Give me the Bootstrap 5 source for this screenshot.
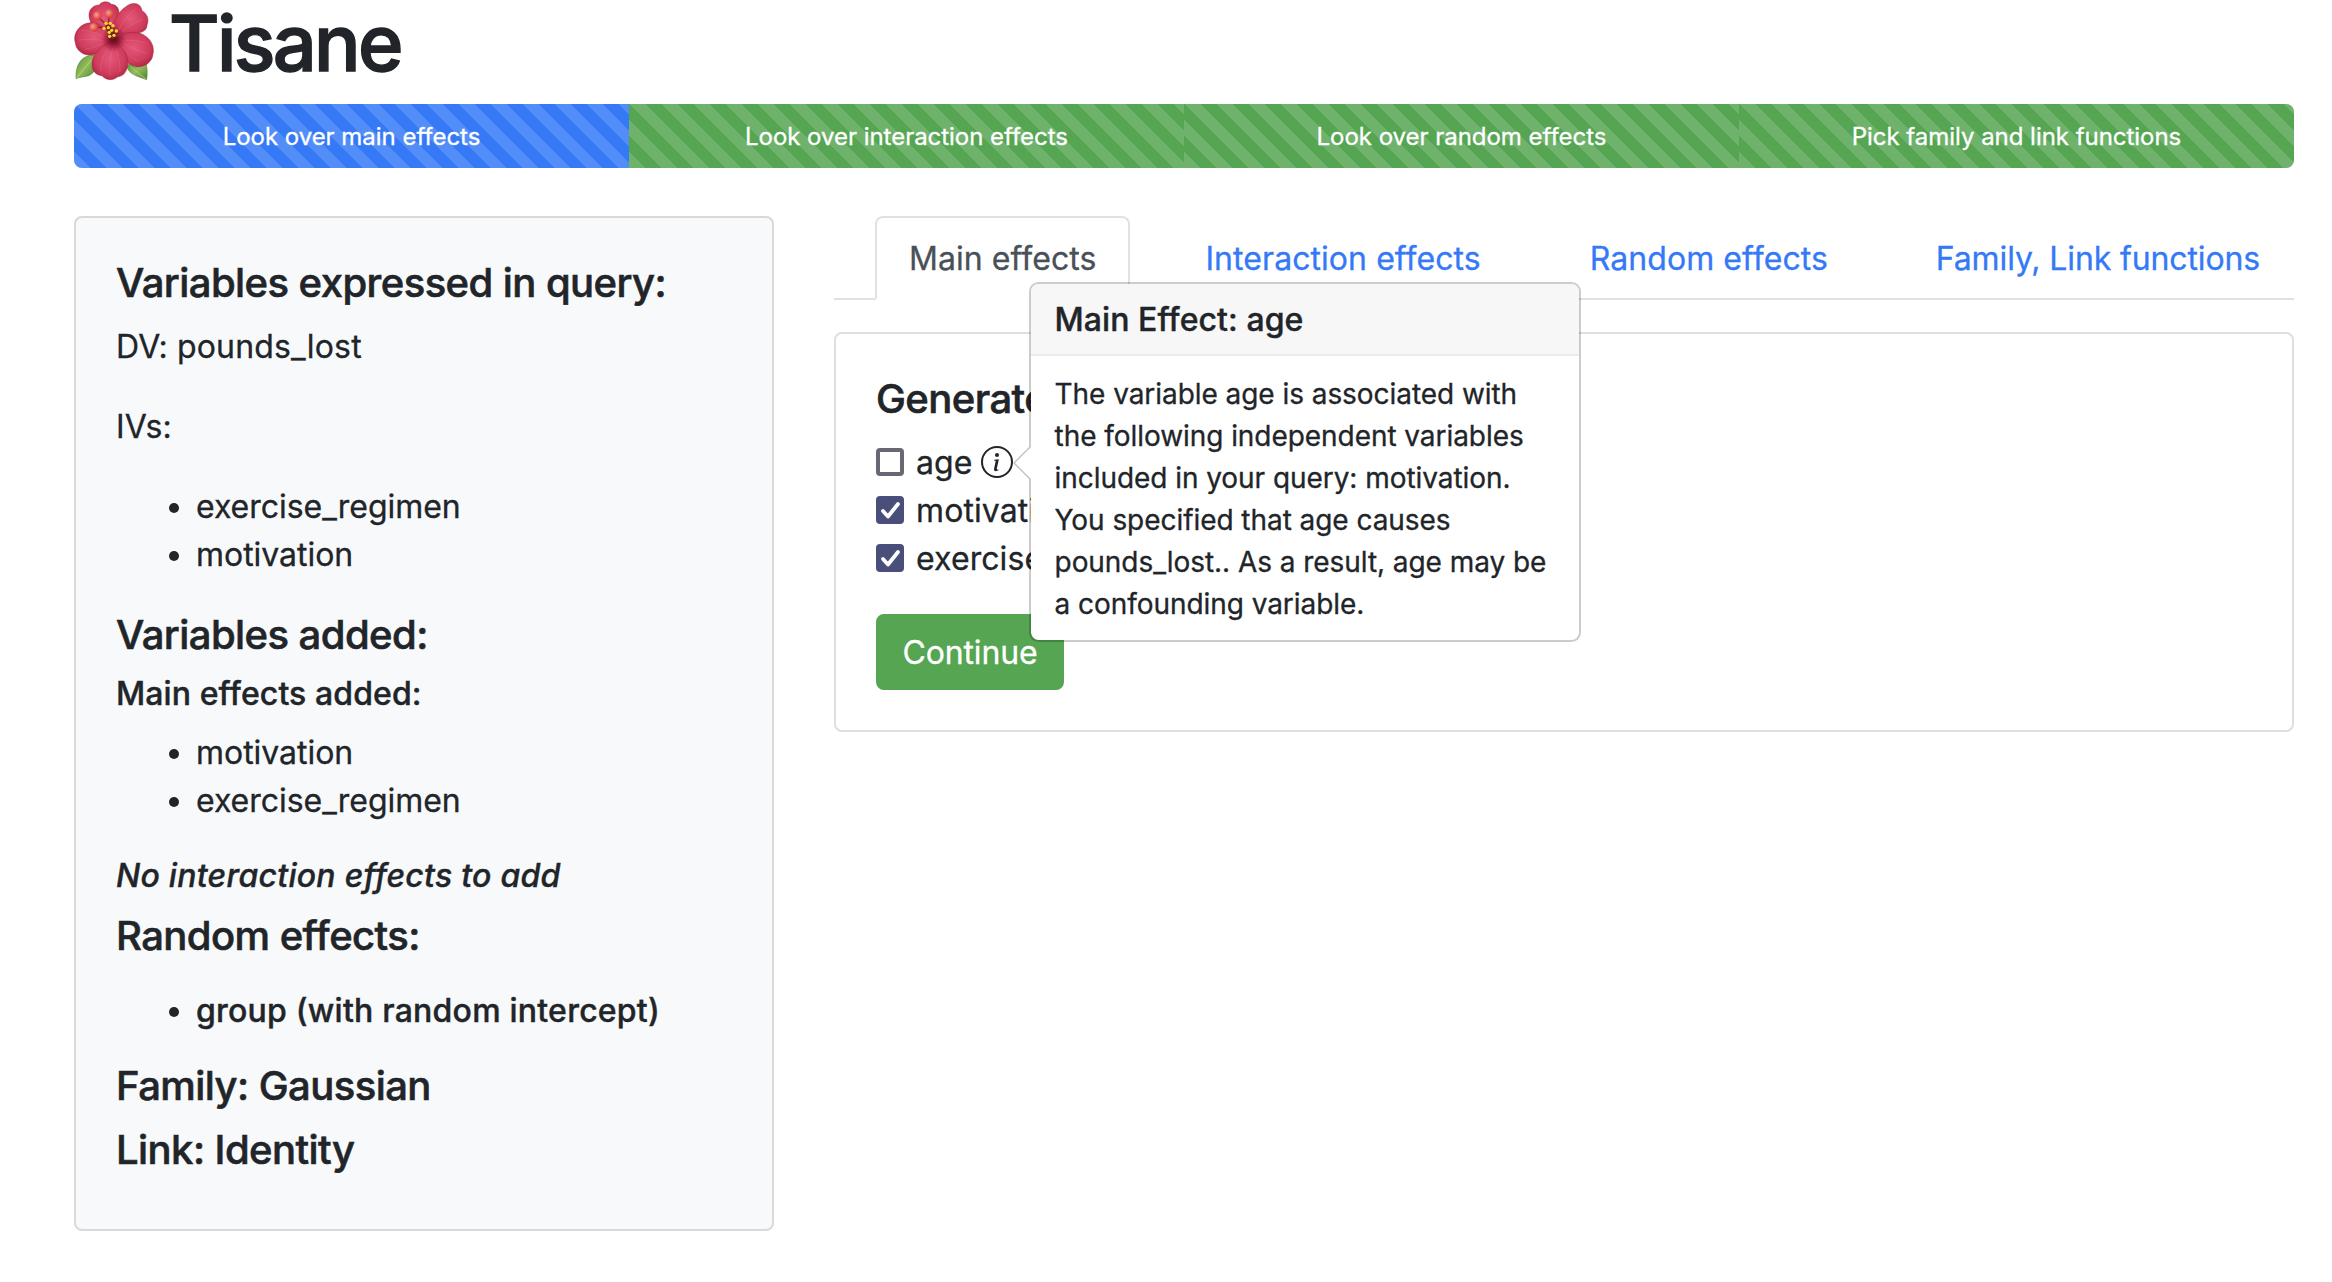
<!DOCTYPE html>
<html lang="en">
<head>
<meta charset="utf-8">
<meta name="viewport" content="width=device-width, initial-scale=1">
<title>Tisane</title>
<link href="https://cdn.jsdelivr.net/npm/bootstrap@5.3.0/dist/css/bootstrap.min.css" rel="stylesheet">
<style>
  :root { font-size: 32px; }
  body {
    font-family: Inter, "Liberation Sans", sans-serif;
    color: #212529;
    letter-spacing: -.001em;
    -webkit-text-stroke: .3px currentColor;
    overflow: hidden;
  }
  .page { padding: 0 38px 0 74px; }
  .brand { height: 88px; margin-bottom: 16px; gap: 15px; }
  .brand svg { width: 80px; height: 86px; flex: none; margin-top: -2px; }
  .brand h1 { font-size: 77.500px; letter-spacing: -.035em; line-height: 1; -webkit-text-stroke-width: 1.400px; }
  h5, .h5 { font-size: 1.25rem; letter-spacing: -.014em; -webkit-text-stroke-width: .6px; }
  h6, .h6 { font-size: 1rem; letter-spacing: .003em; -webkit-text-stroke-width: .4px; }
  h5, h6 { margin-bottom: .5rem; }

  .steps { --bs-progress-height: 64px; --bs-progress-font-size: 24px; --bs-progress-border-radius: 8px; margin-bottom: 48px; }
  .steps .progress-bar { width: 25%; background-size: 32px 32px; padding-top: 1px; }
  .step-now { background-color: #3579f6; }
  .step-next { background-color: #55a552; }

  .main-row { --bs-gutter-x: 60px; }
  .card { --bs-card-border-width: 2px; --bs-card-border-radius: 8px; --bs-card-inner-border-radius: 6px; --bs-card-border-color: rgba(0,0,0,.125); --bs-card-spacer-x: 40px; --bs-card-spacer-y: 40px; }
  .summary { --bs-card-bg: #f8f9fb; }
  .summary .card-body { padding-top: 41px; padding-bottom: 39px; }
  .summary p { letter-spacing: .005em; }
  ul.terms { padding-left: 80px; margin-bottom: 1rem; }
  .note { letter-spacing: .008em; }
  .grp { letter-spacing: .007em; }

  .nav-tabs { --bs-nav-tabs-border-width: 2px; --bs-nav-tabs-border-radius: 8px; --bs-nav-tabs-border-color: #dee2e6; --bs-nav-link-padding-x: 32px; --bs-nav-link-color: #3579f6; --bs-nav-tabs-link-active-color: #495057; }
  .nav-tabs .nav-item { margin-left: 41px; }
  .nav-tabs .nav-item:last-child { margin-left: auto; }
  .nav-tabs .nav-link { margin-bottom: -2px; padding-top: 17px; padding-bottom: 15px; letter-spacing: .002em; }
  .nav-tabs .nav-link.long { letter-spacing: -.004em; }

  .tick { width: 28px; height: 28px; flex: none; margin-right: 12px; display: block; }
  .opt { height: 48px; }
  .opt > span:not(.info) { padding-top: 1px; letter-spacing: .003em; }
  .card .h5-shift { padding-top: 1px; margin-bottom: 15px; }
  .info { position: relative; width: 32px; height: 32px; margin-left: 8px; }
  .info > svg { display: block; width: 32px; height: 32px; }
  .btn-continue { --bs-btn-bg: #55a552; --bs-btn-border-color: #55a552; --bs-btn-color: #fff; --bs-btn-border-width: 2px; --bs-btn-border-radius: 8px; --bs-btn-padding-x: 24px; width: 188px; padding-top: 13px; padding-bottom: 11px; letter-spacing: -.004em; white-space: nowrap; }

  .tip { --bs-popover-max-width: 552px; --bs-popover-border-width: 2px; --bs-popover-border-radius: 9.6px; --bs-popover-inner-border-radius: 7.6px; --bs-popover-border-color: rgba(0,0,0,.2); --bs-popover-font-size: 28px; --bs-popover-header-font-size: 32px; --bs-popover-header-bg: #f7f7f7; --bs-popover-body-padding-x: 24px;
    position: absolute; width: 552px; left: 48px; top: -164px; letter-spacing: -.002em; font-family: Inter, "Liberation Sans", sans-serif; }
  .tip .popover-header { padding: 17px 24px 15px; border-bottom: 2px solid #ebebeb; line-height: 1.2; letter-spacing: .002em; -webkit-text-stroke-width: .4px; }
  .tip .popover-body { color: #212529; padding-top: 17px; padding-bottom: 15px; }
  .tip-arrow { position: absolute; left: -18px; top: 162px; width: 19px; height: 34px; display: block; }
</style>
</head>
<body>
<div class="container-fluid page">
  <header class="brand d-flex align-items-center">
    <svg viewBox="18 0 240 258" aria-hidden="true">
      <defs>
        <radialGradient id="petal" cx=".5" cy=".45" r=".62"><stop offset="0" stop-color="#e4587a"/><stop offset=".65" stop-color="#d03c5c"/><stop offset="1" stop-color="#a8243f"/></radialGradient>
        <radialGradient id="throat"><stop offset="0" stop-color="#5c0615"/><stop offset=".4" stop-color="#7d1026" stop-opacity=".8"/><stop offset="1" stop-color="#a01c38" stop-opacity="0"/></radialGradient>
        <radialGradient id="bead" cx=".4" cy=".4" r=".6"><stop offset="0" stop-color="#f9a08d"/><stop offset="1" stop-color="#d93a35"/></radialGradient>
        <linearGradient id="leaf" x1="0" y1="0" x2="1" y2="1"><stop offset="0" stop-color="#588c36"/><stop offset=".5" stop-color="#93bd5c"/><stop offset="1" stop-color="#4f8230"/></linearGradient>
      </defs>
      <g fill="url(#leaf)" stroke="#4d7d31" stroke-width="1.5">
        <path d="M78 165C45 165 22 188 24 236c22-10 46 0 58-30Z"/>
        <path d="M176 196c4 26 28 32 60 43 3-18 2-36-2-50-18-10-40-6-58 7Z"/>
      </g>
      <path d="M26 233 70 180M234 237l-46-36" fill="none" stroke="#c1da8d" stroke-width="2"/>
      <g fill="url(#petal)" stroke="#a52742" stroke-width="1.5">
        <path d="M130 112C96 98 62 76 63 44c1-19 17-30 31-29 8-13 28-12 36-2 18 1 26 16 22 34Z"/>
        <path d="M136 112C128 72 150 28 188 12c18-6 32 4 34 20 16 10 22 26 15 43 0 20-22 26-46 25-22 0-40 2-55 12Z"/>
        <path d="M134 118C112 78 84 62 56 70 30 78 14 104 22 128c2 22 22 38 44 37 30 0 56-18 68-47Z"/>
        <path d="M138 116c28-22 72-26 97-6 18 14 24 34 20 52-2 24-24 40-48 38-40-8-60-42-69-84Z"/>
        <path d="M134 122c-32 14-64 42-62 72 0 20 14 32 30 33 12 14 32 16 46 4 22-2 34-24 31-50-2-26-20-48-45-59Z"/>
      </g>
      <g fill="none" stroke="#f08ba3" stroke-opacity=".35" stroke-width="2">
        <path d="M40 92c24-2 48 6 70 22M32 120c30-4 52-2 76 2M50 148c20-2 40-10 60-22M90 28c8 22 16 38 30 58M200 30c-22 18-38 36-50 64M222 60c-26 8-44 20-62 38M230 128c-26-8-52-8-76-6M236 160c-26-6-52-20-74-34M210 184c-22-10-38-32-54-52M98 214c0-30 10-54 28-78M126 226c-2-30 2-56 8-82M156 216c0-28-6-50-14-74"/>
      </g>
      <circle cx="137" cy="118" r="38" fill="url(#throat)"/>
      <path d="M136 118 124 84 122 48M122 82 90 50M122 84l-40-3" fill="none" stroke="#9b1d31" stroke-width="4"/>
      <g fill="url(#bead)"><circle cx="124" cy="41" r="13"/><circle cx="88" cy="47" r="13"/><circle cx="77" cy="82" r="13"/></g>
      <path d="m118 76 18 34" stroke="#6d2512" stroke-width="15"/>
      <g fill="#f5dc2c"><circle cx="114" cy="70" r="5"/><circle cx="127" cy="70" r="5"/><circle cx="108" cy="85" r="5"/><circle cx="121" cy="83" r="5"/><circle cx="135" cy="77" r="5"/><circle cx="131" cy="91" r="5"/><circle cx="145" cy="93" r="5"/><circle cx="124" cy="97" r="5"/><circle cx="125" cy="109" r="5"/><circle cx="138" cy="106" r="5"/></g>
    </svg>
    <h1 class="mb-0">Tisane</h1>
  </header>

  <div class="progress steps">
    <div class="progress-bar progress-bar-striped step-now">Look over main effects</div>
    <div class="progress-bar progress-bar-striped step-next">Look over interaction effects</div>
    <div class="progress-bar progress-bar-striped step-next">Look over random effects</div>
    <div class="progress-bar progress-bar-striped step-next">Pick family and link functions</div>
  </div>

  <div class="row main-row align-items-start">
    <div class="col-4">
      <div class="card summary">
        <div class="card-body">
          <h5>Variables expressed in query:</h5>
          <p>DV: pounds_lost</p>
          <p>IVs:</p>
          <ul class="terms"><li>exercise_regimen</li><li>motivation</li></ul>
          <h5>Variables added:</h5>
          <h6>Main effects added:</h6>
          <ul class="terms"><li>motivation</li><li>exercise_regimen</li></ul>
          <h6 class="fst-italic note">No interaction effects to add</h6>
          <h5>Random effects:</h5>
          <ul class="terms h6 grp pt-2 mt-0 mb-3"><li>group (with random intercept)</li></ul>
          <h5>Family: Gaussian</h5>
          <h5>Link: Identity</h5>
        </div>
      </div>
    </div>

    <div class="col-8">
      <ul class="nav nav-tabs">
        <li class="nav-item"><a class="nav-link active" href="#">Main effects</a></li>
        <li class="nav-item"><a class="nav-link" href="#">Interaction effects</a></li>
        <li class="nav-item"><a class="nav-link" href="#">Random effects</a></li>
        <li class="nav-item"><a class="nav-link long" href="#">Family, Link functions</a></li>
      </ul>
      <div class="card mt-3">
        <div class="card-body">
          <h5 class="h5-shift">Generate</h5>
          <div class="opt d-flex align-items-center">
            <svg class="tick" viewBox="0 0 28 28"><rect x="2" y="2" width="24" height="24" rx="2" fill="#fff" stroke="#696773" stroke-width="4"/></svg>
            <span>age</span>
            <span class="info">
              <svg viewBox="0 0 16 16" fill="currentColor"><path d="M8 15A7 7 0 1 1 8 1a7 7 0 0 1 0 14zm0 1A8 8 0 1 0 8 0a8 8 0 0 0 0 16z"/><path d="m8.93 6.588-2.29.287-.082.38.45.083c.294.07.352.176.288.469l-.738 3.468c-.194.897.105 1.319.808 1.319.545 0 1.178-.252 1.465-.598l.088-.416c-.2.176-.492.246-.686.246-.275 0-.375-.193-.304-.533L8.93 6.588zM9 4.5a1 1 0 1 1-2 0 1 1 0 0 1 2 0z"/></svg>
              <div class="popover tip" role="tooltip">
                <svg class="tip-arrow" viewBox="0 0 19 34"><path d="M19 0 2 17l17 17Z" fill="#fff"/><path d="M17 1 1 17l16 16" fill="none" stroke="#c4c4c4" stroke-width="1.5"/></svg>
                <h3 class="popover-header">Main Effect: age</h3>
                <div class="popover-body">The variable age is associated with the following independent variables included in your query: motivation. You specified that age causes pounds_lost.. As a result, age may be a confounding variable.</div>
              </div>
            </span>
          </div>
          <div class="opt d-flex align-items-center">
            <svg class="tick" viewBox="0 0 28 28"><rect width="28" height="28" rx="4" fill="#4a4e7a"/><path d="m7 15 5 5.500L22 8" fill="none" stroke="#fff" stroke-width="3.800" stroke-linecap="round" stroke-linejoin="round"/></svg>
            <span>motivation</span>
          </div>
          <div class="opt d-flex align-items-center">
            <svg class="tick" viewBox="0 0 28 28"><rect width="28" height="28" rx="4" fill="#4a4e7a"/><path d="m7 15 5 5.500L22 8" fill="none" stroke="#fff" stroke-width="3.800" stroke-linecap="round" stroke-linejoin="round"/></svg>
            <span>exercise_regimen</span>
          </div>
          <button type="button" class="btn btn-continue d-block mt-3">Continue</button>
        </div>
      </div>
    </div>
  </div>
</div>
<script src="https://cdn.jsdelivr.net/npm/bootstrap@5.3.0/dist/js/bootstrap.bundle.min.js"></script>
</body>
</html>
